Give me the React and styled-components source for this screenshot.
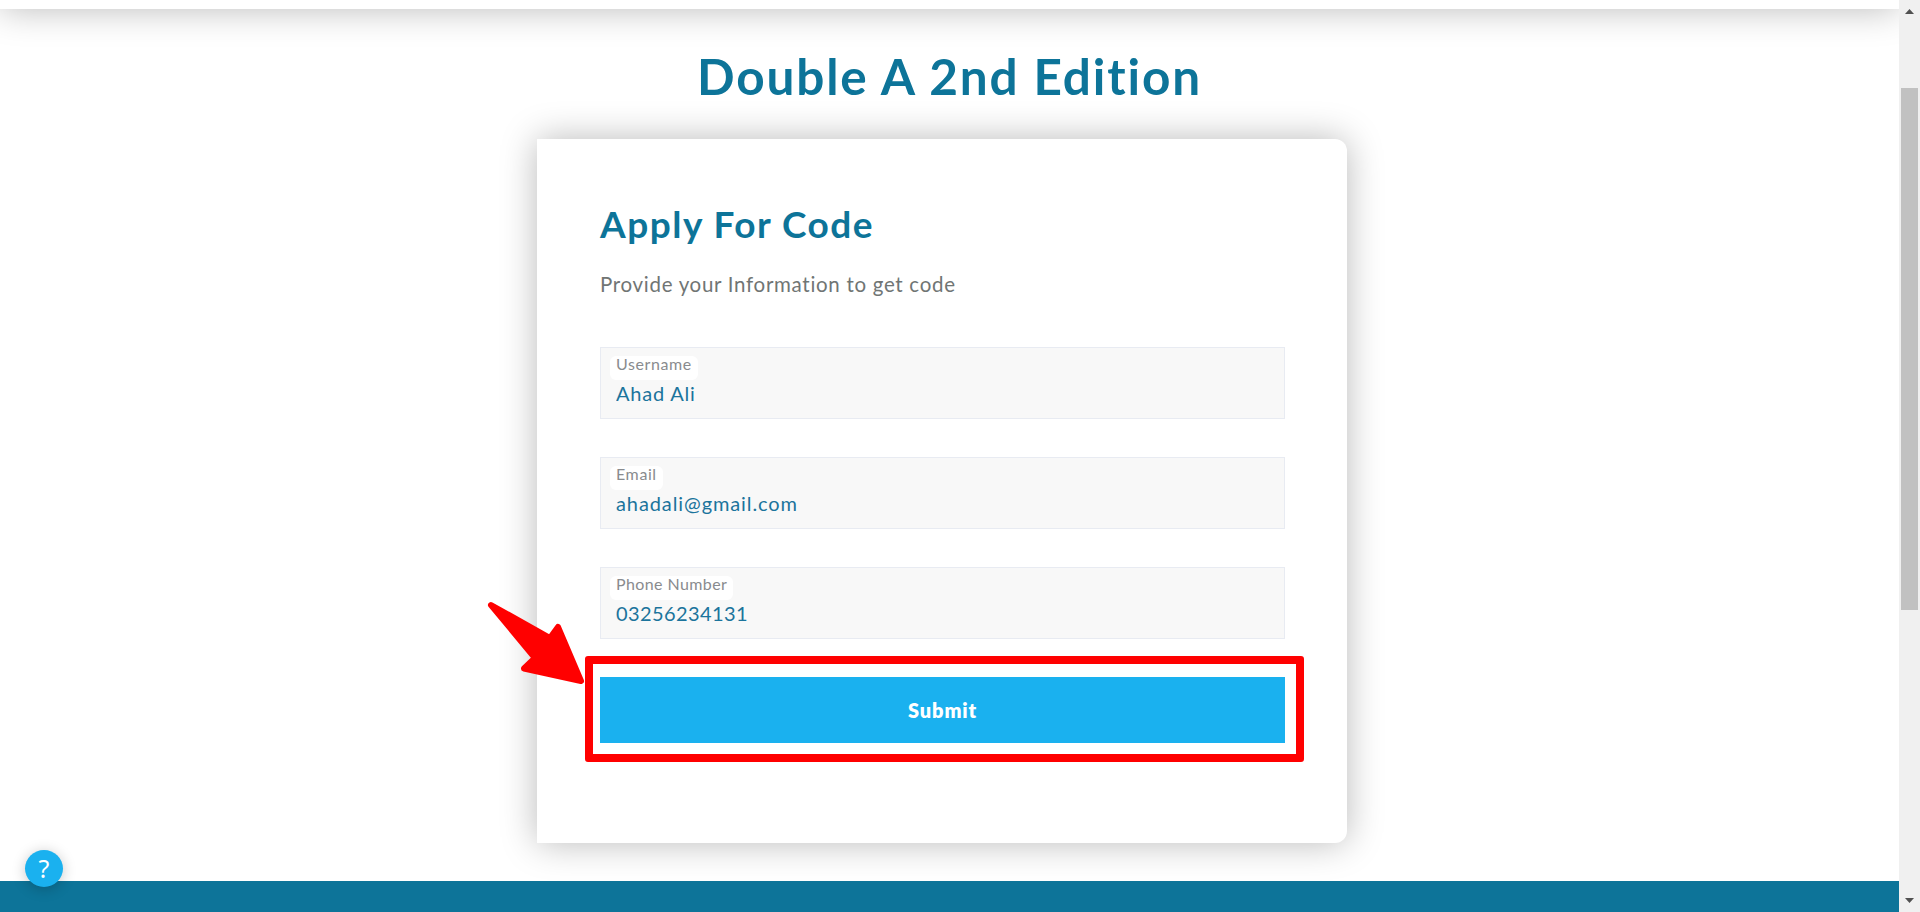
import React from "react";
import styled, { createGlobalStyle } from "styled-components";

const GlobalStyle = createGlobalStyle`
  * { box-sizing: border-box; }
  body { margin: 0; overflow: hidden; background: #fff; }
  body, input, button { font-family: Lato, "Open Sans", sans-serif; }
`;

const Window = styled.div`
  display: flex;
  width: 100%;
  height: 912px;
  overflow: hidden;
`;

const Page = styled.div`
  position: relative;
  flex: 1;
  display: flex;
  flex-direction: column;
  overflow: hidden;
  background: #fff;
`;

const Header = styled.header`
  flex: none;
  height: 100px;
  margin-top: -91px;
  background: #fff;
  box-shadow: 0 0 36px rgba(0, 0, 0, 0.28);
`;

const Main = styled.main`
  flex: none;
  height: 872px;
  padding-top: 37px;
`;

const Title = styled.h1`
  margin: 0 0 33px;
  font-size: 49.5px;
  line-height: 60px;
  font-weight: 700;
  letter-spacing: 1.85px;
  text-align: center;
  color: #0d7499;
`;

const Card = styled.section`
  position: relative;
  width: 810px;
  height: 704px;
  margin-left: 537px;
  padding: 63px 62px 0 63px;
  border-radius: 0 12px 12px 0;
  background: #fff;
  box-shadow: 0 0 36px rgba(0, 0, 0, 0.28);
`;

const CardTitle = styled.h2`
  margin: 0 0 23px;
  font-size: 37px;
  line-height: 44px;
  font-weight: 700;
  letter-spacing: 1.5px;
  color: #0d7499;
`;

const Intro = styled.p`
  margin: 0 0 48px;
  font-size: 20.5px;
  line-height: 30px;
  letter-spacing: 0.7px;
  color: #707574;
`;

const Form = styled.form`
  display: flex;
  flex-direction: column;
  gap: 38px;
`;

const Field = styled.div`
  display: flex;
  flex-direction: column;
  align-items: flex-start;
  height: 72px;
  padding: 8px 9px;
  border: 1px solid #e8ebf2;
  background: #f8f8f8;
`;

const Label = styled.label`
  width: ${(p) => p.$width}px;
  height: 24px;
  padding: 0 6px;
  border-radius: 6px;
  background: #fff;
  font-size: 16px;
  line-height: 15px;
  letter-spacing: ${(p) => p.$spacing}px;
  white-space: nowrap;
  color: #898b8e;
`;

const Input = styled.input`
  width: 100%;
  height: 26px;
  padding: 0 6px;
  border: 0;
  outline: 0;
  background: transparent;
  font-size: 20px;
  line-height: 26px;
  letter-spacing: ${(p) => p.$spacing}px;
  color: #1b749c;
`;

const SubmitButton = styled.button`
  height: 66px;
  padding: 0 0 1px;
  border: 0;
  background: #1ab1ef;
  color: #fff;
  font-size: 20px;
  font-weight: 800;
  letter-spacing: 0.9px;
`;

const Highlight = styled.div`
  position: absolute;
  left: 48px;
  top: 517px;
  width: 719px;
  height: 106px;
  border: 8px solid #f00;
  border-radius: 3px;
  pointer-events: none;
`;

const Pointer = styled.svg`
  position: absolute;
  left: -67px;
  top: 441px;
  width: 120px;
  height: 120px;
  pointer-events: none;
`;

const Footer = styled.footer`
  flex: none;
  height: 31px;
  background: #0d7499;
`;

const HelpButton = styled.button`
  position: absolute;
  left: 25px;
  top: 850px;
  display: grid;
  place-items: center;
  width: 38px;
  height: 37px;
  padding: 0;
  border: 0;
  border-radius: 50%;
  background: #1ab1ef;
  box-shadow: 0 2px 14px rgba(0, 0, 0, 0.22);
  color: #fff;
  font: 400 25px/37px "Noto Sans", sans-serif;
`;

const Scrollbar = styled.div`
  display: flex;
  flex-direction: column;
  align-items: center;
  width: 21px;
  padding: 9px 2px;
  background: #f0f0f0;
`;

const Thumb = styled.div`
  width: 17px;
  height: 522px;
  margin: 74px 0 auto;
  background: #c1c1c1;
`;

const fields = [
  { id: "username", label: "Username", value: "Ahad Ali", width: 88, labelSpacing: 0.6, spacing: 0.8 },
  { id: "email", label: "Email", value: "ahadali@gmail.com", width: 53, labelSpacing: 0.6, spacing: 0.9 },
  { id: "phone", label: "Phone Number", value: "03256234131", width: 123, labelSpacing: 0.4, spacing: 0.4 },
];

export default function App() {
  return (
    <Window>
      <GlobalStyle />
      <Page>
        <Header />
        <Main>
          <Title>Double A 2nd Edition</Title>
          <Card>
            <CardTitle>Apply For Code</CardTitle>
            <Intro>Provide your Information to get code</Intro>
            <Form onSubmit={(e) => e.preventDefault()}>
              {fields.map((f) => (
                <Field key={f.id}>
                  <Label htmlFor={f.id} $width={f.width} $spacing={f.labelSpacing}>{f.label}</Label>
                  <Input id={f.id} defaultValue={f.value} $spacing={f.spacing} spellCheck={false} />
                </Field>
              ))}
              <SubmitButton>Submit</SubmitButton>
            </Form>
            <Highlight />
            <Pointer viewBox="0 0 120 120">
              <path
                d="M21 25 L80 58 L88 47 L111 101 L54 88.5 L65 78 Z"
                fill="#f00"
                stroke="#f00"
                strokeWidth="6"
                strokeLinejoin="round"
              />
            </Pointer>
          </Card>
        </Main>
        <Footer />
        <HelpButton aria-label="Help">?</HelpButton>
      </Page>
      <Scrollbar>
        <svg width="9" height="5" viewBox="0 0 9 5"><path d="M4.5 0 L9 5 H0 Z" fill="#505050" /></svg>
        <Thumb />
        <svg width="9" height="5" viewBox="0 0 9 5"><path d="M0 0 H9 L4.5 5 Z" fill="#505050" /></svg>
      </Scrollbar>
    </Window>
  );
}
